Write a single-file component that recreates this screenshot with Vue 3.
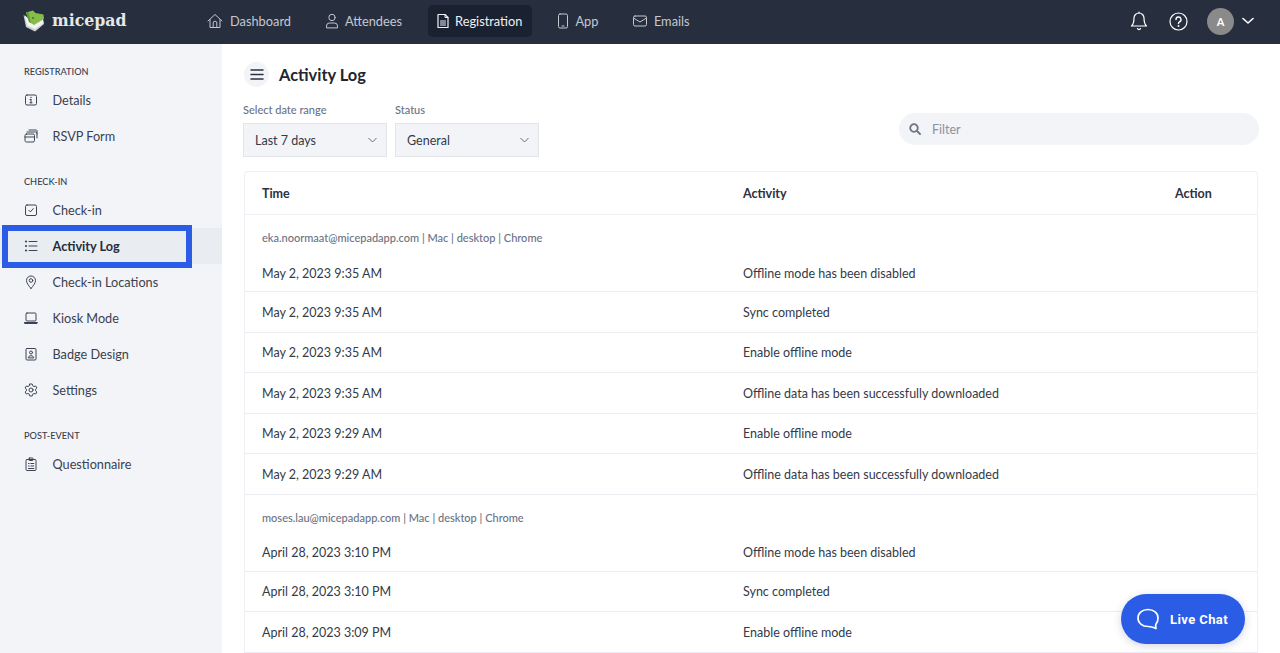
<script setup>
const nav = [
  { label: 'Dashboard', icon: 'home' },
  { label: 'Attendees', icon: 'user' },
  { label: 'Registration', icon: 'doc', active: true },
  { label: 'App', icon: 'phone' },
  { label: 'Emails', icon: 'mail' }
]
const groups = [
  { title: 'REGISTRATION', items: [{ label: 'Details', icon: 'info' }, { label: 'RSVP Form', icon: 'forms' }] },
  { title: 'CHECK-IN', items: [
    { label: 'Check-in', icon: 'check' },
    { label: 'Activity Log', icon: 'list', active: true },
    { label: 'Check-in Locations', icon: 'pin' },
    { label: 'Kiosk Mode', icon: 'laptop' },
    { label: 'Badge Design', icon: 'badge' },
    { label: 'Settings', icon: 'gear' }
  ] },
  { title: 'POST-EVENT', items: [{ label: 'Questionnaire', icon: 'clip' }] }
]
const logs = [
  { who: 'eka.noormaat@micepadapp.com | Mac | desktop | Chrome', rows: [
    ['May 2, 2023 9:35 AM', 'Offline mode has been disabled'],
    ['May 2, 2023 9:35 AM', 'Sync completed'],
    ['May 2, 2023 9:35 AM', 'Enable offline mode'],
    ['May 2, 2023 9:35 AM', 'Offline data has been successfully downloaded'],
    ['May 2, 2023 9:29 AM', 'Enable offline mode'],
    ['May 2, 2023 9:29 AM', 'Offline data has been successfully downloaded']
  ] },
  { who: 'moses.lau@micepadapp.com | Mac | desktop | Chrome', rows: [
    ['April 28, 2023 3:10 PM', 'Offline mode has been disabled'],
    ['April 28, 2023 3:10 PM', 'Sync completed'],
    ['April 28, 2023 3:09 PM', 'Enable offline mode']
  ] }
]
</script>

<template>
  <div class="page">
    <header class="topbar">
      <div class="brand">
        <svg class="logo" width="22" height="22" viewBox="0 0 22 22">
          <path d="M0.500 5 L3 17 L12 21.500 L21 14 L20 10 L8 13 Z" fill="#cfd3d3" />
          <path d="M1.500 5 L4.500 15.500 L12 19 L20.500 13 L20 9 L9 12 Z" fill="#f4f5f3" />
          <path d="M3 2.500 L10 0.500 L12.500 3 L20.500 4.500 L21 9 L11 15 L6 12 Z" fill="#86bd48" />
          <path d="M3 2.500 L6 12 L8 13 L5.500 2 Z" fill="#5f9a33" />
          <circle cx="10" cy="8" r="1" fill="#46702a" />
        </svg>
        <span class="brand-name">micepad</span>
      </div>
      <nav class="topnav">
        <a v-for="n in nav" :key="n.label" class="topnav-item" :class="{ on: n.active, ['t-' + n.icon]: true }">
          <svg width="16" height="16" viewBox="0 0 16 16" fill="none" stroke="currentColor" stroke-width="1" stroke-linecap="round" stroke-linejoin="round">
            <template v-if="n.icon === 'home'">
              <path d="M1 8 L8 1.500 L15 8" /><path d="M3 6.500 V14.500 H13 V6.500" /><path d="M6.200 14.500 V10 A1.800 1.800 0 0 1 9.800 10 V14.500" />
            </template>
            <template v-else-if="n.icon === 'user'">
              <circle cx="8" cy="4.500" r="3.200" /><path d="M2.500 14.500 V13 A3 3 0 0 1 5.500 10 H10.500 A3 3 0 0 1 13.500 13 V14.500 Z" />
            </template>
            <template v-else-if="n.icon === 'doc'">
              <path d="M3 1.500 H10 L13 4.500 V14.500 H3 Z" stroke-width="1.200" /><path d="M10 1.500 V4.500 H13" /><path d="M5.500 8 H10.500 M5.500 10 H10.500 M5.500 12 H10.500" stroke-width="1.200" />
            </template>
            <template v-else-if="n.icon === 'phone'">
              <rect x="3.500" y="1" width="9" height="14" rx="1.500" /><path d="M7 13 H9" />
            </template>
            <template v-else>
              <rect x="1.500" y="3" width="13" height="10" rx="1.500" /><path d="M1.500 5 L8 9 L14.500 5" />
            </template>
          </svg>
          <span>{{ n.label }}</span>
        </a>
      </nav>
      <div class="top-right">
        <svg class="bell" width="18" height="20" viewBox="0 0 18 20" fill="none" stroke="#fff" stroke-width="1.200" stroke-linecap="round" stroke-linejoin="round">
          <path d="M9 2 A5 5 0 0 0 4 7 C4 11 3.500 13 1.500 15 H16.500 C14.500 13 14 11 14 7 A5 5 0 0 0 9 2 Z" />
          <path d="M9 1 V2" /><path d="M7.500 17.500 A1.600 1.600 0 0 0 10.500 17.500" />
        </svg>
        <svg class="help" width="19" height="19" viewBox="0 0 19 19" fill="none" stroke="#fff" stroke-width="1.200" stroke-linecap="round">
          <circle cx="9.500" cy="9.500" r="8.500" />
          <path d="M7 7.500 A2.500 2.500 0 1 1 10.500 9.800 C9.800 10.200 9.500 10.600 9.500 11.500" stroke-width="1.400" />
          <circle cx="9.500" cy="14" r="0.400" />
        </svg>
        <div class="avatar">A</div>
        <svg width="12" height="8" viewBox="0 0 12 8" fill="none" stroke="#fff" stroke-width="1.600" stroke-linecap="round" stroke-linejoin="round"><path d="M1 1.500 L6 6 L11 1.500" /></svg>
      </div>
    </header>

    <div class="body">
      <aside class="sidebar">
        <section v-for="g in groups" :key="g.title" class="side-group">
          <h4>{{ g.title }}</h4>
          <a v-for="i in g.items" :key="i.label" class="side-item" :class="{ on: i.active }">
            <svg width="14" height="14" viewBox="0 0 14 14" fill="none" stroke="#3c4454" stroke-width="1" stroke-linecap="round" stroke-linejoin="round">
              <template v-if="i.icon === 'info'">
                <rect x="1.500" y="2" width="11" height="10" rx="1.500" /><path d="M7 6.500 V9.800 M6 6.500 H7 M6 9.800 H8" /><path d="M7 4.300 V4.500" stroke-width="1.300" />
              </template>
              <template v-else-if="i.icon === 'forms'">
                <rect x="1" y="5" width="9.500" height="8" rx="1.500" /><path d="M1 8 H10.500" /><path d="M3 3 H11.500 A1.500 1.500 0 0 1 13 4.500 V9" /><path d="M5 1 H12.500 L13 1.500 V5" />
              </template>
              <template v-else-if="i.icon === 'check'">
                <rect x="1.500" y="2" width="11" height="10.500" rx="1.500" /><path d="M4.800 7.300 L6.400 8.900 L9.300 5.600" />
              </template>
              <template v-else-if="i.icon === 'list'">
                <path d="M5 2.500 H13 M5 7 H13 M5 11.500 H13" />
                <circle cx="2" cy="2.500" r="1.100" fill="#3c4454" stroke="none" /><circle cx="2" cy="7" r="1.100" fill="#3c4454" stroke="none" /><circle cx="2" cy="11.500" r="1.100" fill="#3c4454" stroke="none" />
              </template>
              <template v-else-if="i.icon === 'pin'">
                <path d="M7 13.500 C4.500 10.500 2.500 8 2.500 5.500 A4.500 4.500 0 0 1 11.500 5.500 C11.500 8 9.500 10.500 7 13.500 Z" /><circle cx="7" cy="5.500" r="1.800" />
              </template>
              <template v-else-if="i.icon === 'laptop'">
                <rect x="2" y="2" width="10" height="8" rx="1" /><path d="M0.500 11.500 H13.500 L13 12.500 H1 Z" />
              </template>
              <template v-else-if="i.icon === 'badge'">
                <rect x="2" y="1.500" width="10" height="11.500" rx="1" /><circle cx="7" cy="5.500" r="1.500" /><path d="M4.300 10.500 C4.500 8 9.500 8 9.700 10.500 Z" />
              </template>
              <template v-else-if="i.icon === 'gear'">
                <path d="M5.800 1 H8.200 L8.600 2.700 L10 3.500 L11.700 3 L12.900 5 L11.600 6.200 V7.800 L12.900 9 L11.700 11 L10 10.500 L8.600 11.300 L8.200 13 H5.800 L5.400 11.300 L4 10.500 L2.300 11 L1.100 9 L2.400 7.800 V6.200 L1.100 5 L2.300 3 L4 3.500 L5.400 2.700 Z" /><circle cx="7" cy="7" r="2" />
              </template>
              <template v-else>
                <rect x="2" y="2.500" width="10" height="11" rx="1" /><rect x="5" y="1" width="4" height="2.500" rx=".5" /><path d="M4.500 6.500 H5.200 M6.800 6.500 H9.800 M4.500 9 H5.200 M6.800 9 H9.800 M4.500 11.500 H9.800" />
              </template>
            </svg>
            <span>{{ i.label }}</span>
          </a>
        </section>
        <div class="callout"></div>
      </aside>

      <main class="main">
        <div class="title-row">
          <button class="menu-btn" aria-label="Menu">
            <svg width="14" height="11" viewBox="0 0 14 11" stroke="#2b3140" stroke-width="1.500" stroke-linecap="round"><path d="M1 1 H13 M1 5.500 H13 M1 10 H13" /></svg>
          </button>
          <h1>Activity Log</h1>
        </div>
        <div class="filters">
          <div class="field">
            <label>Select date range</label>
            <div class="select"><span>Last 7 days</span><svg width="9" height="6" viewBox="0 0 9 6" fill="none" stroke="#666d7a" stroke-width="1"><path d="M.5 1 L4.500 5 L8.500 1" /></svg></div>
          </div>
          <div class="field">
            <label>Status</label>
            <div class="select"><span>General</span><svg width="9" height="6" viewBox="0 0 9 6" fill="none" stroke="#666d7a" stroke-width="1"><path d="M.5 1 L4.500 5 L8.500 1" /></svg></div>
          </div>
          <div class="search">
            <svg width="12" height="12" viewBox="0 0 12 12" fill="none" stroke="#6d7483" stroke-width="1.800" stroke-linecap="round"><circle cx="5" cy="5" r="3.800" /><path d="M8 8 L11 11" /></svg>
            <span>Filter</span>
          </div>
        </div>
        <div class="table">
          <div class="row head"><span>Time</span><span>Activity</span><span>Action</span></div>
          <template v-for="l in logs" :key="l.who">
            <div class="who">{{ l.who }}</div>
            <div v-for="(r, idx) in l.rows" :key="idx" class="row entry" :class="{ first: idx === 0 }">
              <span>{{ r[0] }}</span><span>{{ r[1] }}</span><span></span>
            </div>
          </template>
        </div>
      </main>
    </div>

    <button class="chat">
      <svg width="24" height="24" viewBox="0 0 24 24" fill="none" stroke="#fff" stroke-width="1.700" stroke-linejoin="round"><path d="M12 2.500 C6.200 2.500 2 6 2 11 C2 16 6.200 19.500 12 19.500 C14 19.500 16.500 19.800 20 21.500 C19.500 19.500 19.500 18 20 17 C21.500 15.500 22 13.500 22 11 C22 6 17.800 2.500 12 2.500 Z" /></svg>
      <span>Live Chat</span>
    </button>
  </div>
</template>

<style>
html, body { margin: 0; height: 100%; overflow: hidden; background: #fff; }
</style>

<style scoped>
.page { height: 653px; display: flex; flex-direction: column; font-family: Lato, "Liberation Sans", sans-serif; color: #2f3645; overflow: hidden; position: relative; }
.topbar { height: 44px; flex: none; background: #272f3f; display: flex; align-items: center; padding-bottom: 2px; box-sizing: border-box; }
.brand { width: 200px; padding-left: 23px; box-sizing: border-box; display: flex; align-items: center; gap: 7px; flex: none; }
.brand-name { font-family: "DejaVu Serif", serif; font-stretch: condensed; font-size: 17.500px; font-weight: 700; color: #e6e8e6; position: relative; top: -1px; }
.topnav { display: flex; align-items: center; flex: 1; }
.topnav-item { display: flex; align-items: center; color: #c4c8cf; font-size: 12.800px; height: 32px; padding: 0 10px; border-radius: 5px; box-sizing: border-box; }
.t-home { margin-left: -3px; gap: 7px; }
.t-user { margin-left: 13px; gap: 5px; }
.t-doc { margin-left: 16px; gap: 4px; padding-left: 7px; background: #1a2131; color: #eef0f3; }
.t-phone { margin-left: 12.500px; gap: 4.500px; }
.t-mail { margin-left: 14px; gap: 5.500px; }
.top-right { display: flex; align-items: center; padding-right: 26px; }
.help { margin-left: 21px; }
.avatar { width: 27px; height: 27px; border-radius: 50%; background: #8a8a8a; color: #fff; font-size: 11px; font-weight: 700; display: flex; align-items: center; justify-content: center; margin-left: 19px; margin-right: 8px; }

.body { flex: 1; display: flex; min-height: 0; }
.sidebar { width: 222px; flex: none; background: #f2f4f8; position: relative; padding-top: 21px; box-sizing: border-box; }
.side-group { margin-bottom: 21px; }
.side-group h4 { margin: 0; padding-left: 24px; font-size: 9.200px; font-weight: 500; line-height: 13px; color: #3a4150; height: 17px; }
.side-item { display: flex; align-items: center; height: 36px; padding-left: 24px; gap: 14.500px; font-size: 12.700px; color: #3a4150; }
.side-item.on { background: #e9edf2; font-weight: 700; color: #262c39; }
.callout { position: absolute; left: 2px; top: 181px; width: 190px; height: 43px; border: 6px solid #2b5ce6; box-sizing: border-box; }

.main { flex: 1; min-width: 0; padding: 18px 21px 0 21px; display: flex; flex-direction: column; }
.title-row { display: flex; align-items: center; gap: 10px; height: 25px; }
.menu-btn { width: 25px; height: 25px; border: none; border-radius: 50%; background: #f2f4f8; display: flex; align-items: center; justify-content: center; padding: 0; margin-left: 1px; }
h1 { margin: 0; font-size: 16.400px; font-weight: 700; color: #20252f; }
.filters { display: flex; gap: 8px; margin-top: 16px; align-items: flex-start; }
.field label { display: block; font-size: 11px; font-weight: 500; color: #6a7283; line-height: 14px; margin-bottom: 6px; }
.select { width: 144px; height: 34px; box-sizing: border-box; background: #f2f4f8; border: 1px solid #e2e5ea; display: flex; align-items: center; justify-content: space-between; padding: 0 9px 0 11px; font-size: 12.500px; color: #333a48; }
.search { margin-left: auto; margin-top: 10px; width: 360px; height: 32px; border-radius: 16px; background: #f2f4f8; display: flex; align-items: center; gap: 11px; padding-left: 10px; box-sizing: border-box; font-size: 12.500px; color: #8b919d; }
.table { margin: 14px 1px 0 1px; border: 1px solid #eef0f5; border-bottom: none; border-radius: 4px 4px 0 0; }
.row { display: grid; grid-template-columns: 481px 432px 1fr; padding-left: 17px; align-items: center; font-size: 12.500px; color: #333a48; }
.head { height: 43px; padding-top: 1px; font-weight: 700; border-bottom: 1px solid #eef0f5; color: #2b3140; box-sizing: border-box; }
.who { height: 40px; padding: 5px 0 0 17px; box-sizing: border-box; font-size: 11px; font-weight: 500; color: #6a7283; display: flex; align-items: center; }
.entry { height: 40.500px; padding-top: 0.600px; border-bottom: 1px solid #eaecf1; box-sizing: border-box; }
.entry.first { height: 37px; padding-top: 0; }
.chat { position: absolute; left: 1121px; top: 594px; width: 124px; height: 50px; border: none; border-radius: 25px; background: #2b5ce6; color: #fff; display: flex; align-items: center; gap: 10px; padding: 0 0 0 15px; box-sizing: border-box; font-family: Roboto, "Liberation Sans", sans-serif; font-weight: 700; font-size: 13px; letter-spacing: 0.400px; box-shadow: 0 2px 8px rgba(30, 50, 110, .2); }
</style>
